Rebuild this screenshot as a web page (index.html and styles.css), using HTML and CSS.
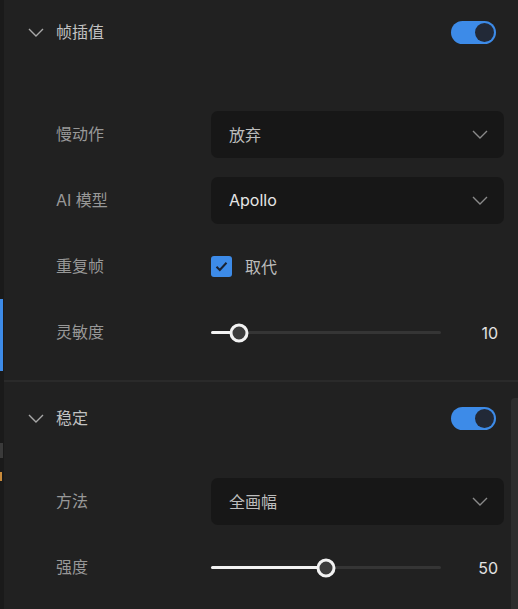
FILE: index.html
```html
<!DOCTYPE html>
<html lang="zh">
<head>
<meta charset="utf-8">
<link rel="stylesheet" href="styles.css">
</head>
<body>
<div class="app">
  <div class="rail">
    <div class="rail-active"></div>
    <div class="rail-gray"></div>
    <div class="rail-orange"></div>
  </div>
  <div class="panel">
    <section class="section first">
      <div class="sec-head">
        <svg class="chev" width="16" height="9" viewBox="0 0 16 9"><path d="M1 1 L8 8 L15 1" fill="none" stroke="#a8a8a8" stroke-width="1.4"/></svg>
        <span class="sec-title">帧插值</span>
        <span class="toggle"><span class="knob"></span></span>
      </div>
      <div class="sec-body">
        <div class="row">
          <span class="label">慢动作</span>
          <div class="select"><span class="sel-text cjk">放弃</span>
            <svg width="16" height="9" viewBox="0 0 16 9"><path d="M1 1 L8 8 L15 1" fill="none" stroke="#8a8a8a" stroke-width="1.4"/></svg></div>
        </div>
        <div class="row">
          <span class="label">AI 模型</span>
          <div class="select"><span class="sel-text latin">Apollo</span>
            <svg width="16" height="9" viewBox="0 0 16 9"><path d="M1 1 L8 8 L15 1" fill="none" stroke="#8a8a8a" stroke-width="1.4"/></svg></div>
        </div>
        <div class="row">
          <span class="label">重复帧</span>
          <div class="check-wrap">
            <span class="checkbox"><svg width="13" height="11" viewBox="0 0 13 11"><path d="M1.5 5.8 L4.8 9 L11.5 1.8" fill="none" stroke="#1b2230" stroke-width="2"/></svg></span>
            <span class="check-text">取代</span>
          </div>
        </div>
        <div class="row">
          <span class="label">灵敏度</span>
          <div class="slider-wrap">
            <div class="track"><div class="fill" style="width:28px"></div><span class="thumb" style="left:28px"></span></div>
            <span class="value">10</span>
          </div>
        </div>
      </div>
    </section>
    <section class="section second">
      <div class="sec-head">
        <svg class="chev" width="16" height="9" viewBox="0 0 16 9"><path d="M1 1 L8 8 L15 1" fill="none" stroke="#a8a8a8" stroke-width="1.4"/></svg>
        <span class="sec-title">稳定</span>
        <span class="toggle"><span class="knob"></span></span>
      </div>
      <div class="sec-body">
        <div class="row">
          <span class="label">方法</span>
          <div class="select"><span class="sel-text cjk">全画幅</span>
            <svg width="16" height="9" viewBox="0 0 16 9"><path d="M1 1 L8 8 L15 1" fill="none" stroke="#8a8a8a" stroke-width="1.4"/></svg></div>
        </div>
        <div class="row">
          <span class="label">强度</span>
          <div class="slider-wrap">
            <div class="track"><div class="fill" style="width:115px"></div><span class="thumb" style="left:115px"></span></div>
            <span class="value">50</span>
          </div>
        </div>
      </div>
    </section>
    <div class="scrollbar"></div>
  </div>
</div>
</body>
</html>
```
FILE: styles.css
```css
html, body {
  margin: 0;
  padding: 0;
  background: #212121;
  height: 100%;
  overflow: hidden;
}
body {
  font-family: "Inter", "Noto Sans CJK SC", sans-serif;
  font-size: 16px;
}
.app {
  display: flex;
  height: 609px;
}
.rail {
  width: 4px;
  background: #1a1a1a;
  display: flex;
  flex-direction: column;
}
.rail-active {
  margin-top: 299px;
  height: 72px;
  width: 3px;
  background: #3d8be8;
}
.rail-gray {
  margin-top: 72px;
  height: 15px;
  width: 3px;
  background: #3a3a3a;
}
.rail-orange {
  margin-top: 14px;
  height: 9px;
  width: 2px;
  background: #c88a3a;
}
.panel {
  flex: 1;
  position: relative;
}
.section.first {
  border-bottom: 2px solid #2a2a2a;
  padding-bottom: 24px;
}
.section.second {
  padding-top: 4px;
}
.sec-head {
  height: 64px;
  display: flex;
  align-items: center;
  padding-left: 24px;
  padding-right: 22px;
}
.chev {
  margin-right: 12px;
}
.sec-title {
  color: #c2c2c2;
  flex: 1;
  font-family: "Noto Sans CJK SC", sans-serif;
  padding-bottom: 2px;
}
.toggle {
  width: 45px;
  height: 23px;
  border-radius: 12px;
  background: #3d8be8;
  display: flex;
  align-items: center;
  justify-content: flex-end;
  padding-right: 2px;
  box-sizing: border-box;
}
.knob {
  width: 19px;
  height: 19px;
  border-radius: 50%;
  background: #222937;
}
.first .sec-body {
  padding-top: 47px;
}
.second .sec-body {
  padding-top: 28px;
}
.sec-body {
  display: flex;
  flex-direction: column;
  gap: 19px;
  padding-left: 52px;
  padding-right: 14px;
}
.row {
  height: 47px;
  display: flex;
  align-items: center;
}
.label {
  width: 155px;
  color: #989898;
  flex-shrink: 0;
  padding-bottom: 4px;
}
.select {
  flex: 1;
  height: 47px;
  background: #171717;
  border-radius: 7px;
  display: flex;
  align-items: center;
  justify-content: space-between;
  padding: 0 16px 0 18px;
  box-sizing: border-box;
}
.sel-text.cjk {
  color: #bdbdbd;
  font-family: "Noto Sans CJK SC", sans-serif;
  padding-bottom: 2px;
}
.sel-text.latin {
  color: #e6e6e6;
  padding-bottom: 2px;
}
.check-wrap {
  display: flex;
  align-items: center;
  gap: 13px;
}
.checkbox {
  width: 21px;
  height: 21px;
  border-radius: 3px;
  background: #3d8be8;
  display: flex;
  align-items: center;
  justify-content: center;
}
.check-text {
  color: #bdbdbd;
  font-family: "Noto Sans CJK SC", sans-serif;
  padding-bottom: 2px;
}
.slider-wrap {
  flex: 1;
  display: flex;
  align-items: center;
  padding-right: 6px;
}
.track {
  width: 230px;
  height: 3px;
  background: #353535;
  border-radius: 2px;
  position: relative;
}
.fill {
  height: 3px;
  background: #f2f2f2;
  border-radius: 2px;
}
.thumb {
  position: absolute;
  top: 50%;
  width: 13px;
  height: 13px;
  border: 3px solid #f2f2f2;
  border-radius: 50%;
  background: #3c3c3c;
  transform: translate(-50%, -50%);
}
.value {
  flex: 1;
  text-align: right;
  color: #e2e2e2;
}
.scrollbar {
  position: absolute;
  right: 0;
  top: 398px;
  bottom: 0;
  width: 7px;
  background: #2d2d2d;
  border-radius: 4px 0 0 0;
}
```
